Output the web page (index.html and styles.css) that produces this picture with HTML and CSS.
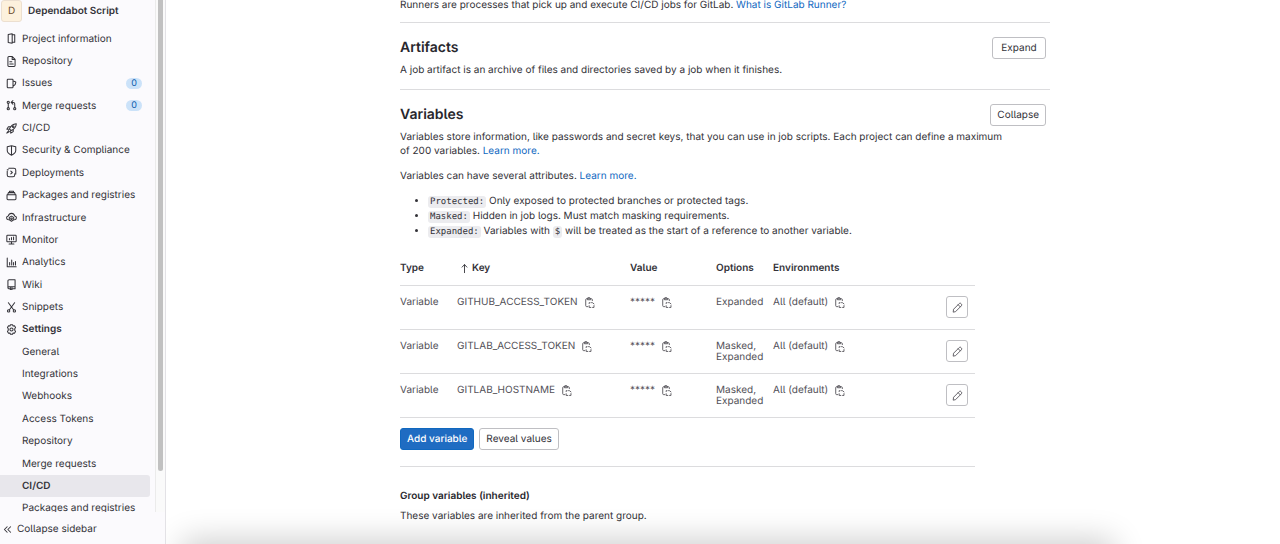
FILE: index.html
```html
<!DOCTYPE html>
<html lang="en">
<head>
<meta charset="utf-8">
<title>CI/CD Settings · Dependabot Script</title>
<link rel="stylesheet" href="styles.css">
</head>
<body>
<svg class="sprite" aria-hidden="true">
  <symbol id="i-info" viewBox="0 0 16 16"><path d="M9 1.200 3.200 2.300v11.400L9 14.800zM9 2.500h3.700v11H9"/></symbol>
  <symbol id="i-doc" viewBox="0 0 16 16"><path d="M2.800 2.200c0-.8.6-1.400 1.400-1.400h5l4 4v9c0 .8-.6 1.400-1.400 1.400H4.200c-.8 0-1.400-.6-1.400-1.400zM9 1v4h4M5.500 8.500h3M5.500 11.500h5"/></symbol>
  <symbol id="i-issues" viewBox="0 0 16 16"><path d="M1.800 2.800c0-.6.4-1 1-1h6.400c.6 0 1 .4 1 1v10.400c0 .6-.4 1-1 1H2.800c-.6 0-1-.4-1-1zM10.500 4.500l3 .8c.6.2.9.7.7 1.300l-1 3-2.700 2"/></symbol>
  <symbol id="i-merge" viewBox="0 0 16 16"><path d="M3.300 5v6M12.700 11V5.500c0-1.200-.8-2-2-2H8M10 1 7.500 3.500 10 6"/><circle cx="3.300" cy="3.300" r="1.600"/><circle cx="3.300" cy="12.700" r="1.600"/><circle cx="12.700" cy="12.700" r="1.600"/></symbol>
  <symbol id="i-rocket" viewBox="0 0 16 16"><path d="M5 8.500C7 4 10 1.500 15 1c-.3 5-3 8-7.500 10zM6 5.500H3.500L1.200 9l3.500.2M10.500 10v2.500L7 14.800l-.3-3.500M4 11l-2.800 3.800L5 12.500"/><circle cx="10.500" cy="5.500" r="1.200"/></symbol>
  <symbol id="i-shield" viewBox="0 0 16 16"><path d="M8 1 14.200 2.500V8c0 3-2.700 5.300-6.200 7C4.500 13.300 1.800 11 1.800 8V2.500zM8 1v14"/></symbol>
  <symbol id="i-deploy" viewBox="0 0 16 16"><path d="M4 1.800h7.500c1.500 0 2.700 1.200 2.700 2.700V10M1.800 6v5.500c0 1.500 1.200 2.700 2.700 2.700h5.700c1.500 0 2.500-1 2.500-2.500V10M1.800 4h1.500M7 6l2.200 2L7 10"/></symbol>
  <symbol id="i-package" viewBox="0 0 16 16"><path d="M1.500 6.800h13v6c0 .8-.6 1.400-1.400 1.400H2.900c-.8 0-1.400-.6-1.400-1.400zM2.500 6.800l1-3h9l1 3M5 3.500V1.800h6v1.700"/></symbol>
  <symbol id="i-infra" viewBox="0 0 16 16"><path d="M3.500 11.300C1.700 11 .8 9.800.8 8.500c0-1.500 1.100-2.600 2.600-2.800C4 3.500 5.700 2 8 2s4 1.500 4.600 3.700c1.500.2 2.600 1.300 2.600 2.800 0 1.300-.9 2.500-2.700 2.800"/><path d="m8 6 3.200 1.800v3.700L8 13.500l-3.200-2V7.800z"/><circle cx="8" cy="9.800" r="1.200"/></symbol>
  <symbol id="i-monitor" viewBox="0 0 16 16"><path d="M2.200 1.800h11.600c.6 0 1 .4 1 1v7.400c0 .6-.4 1-1 1H2.200c-.6 0-1-.4-1-1V2.800c0-.6.4-1 1-1zM4.500 14.500h7M8 11v3.500M5 6.500v2M8 5v3.500M11 4.500v4"/></symbol>
  <symbol id="i-chart" viewBox="0 0 16 16"><path d="M1.800 1.500v12.700h13M5.300 8v3.500M8.300 4.500v7M11 8v3.500M13.800 6.500v5"/></symbol>
  <symbol id="i-wiki" viewBox="0 0 16 16"><path d="M13.200 11.500V1.200H4.500c-1 0-1.700.7-1.700 1.700v9.900M13.200 11.300H4.500c-2.200 0-2.200 3 0 3H5M10 14.300h3.200v-3M6.300 12.500v3l1.200-1 1.200 1v-3"/></symbol>
  <symbol id="i-snip" viewBox="0 0 16 16"><path d="M3.500 1 11 11.200M12.500 1 5 11.200"/><circle cx="3.800" cy="13" r="1.700"/><circle cx="12.200" cy="13" r="1.700"/></symbol>
  <symbol id="i-gear" viewBox="0 0 16 16"><path d="M6.500 1h3l.8 1.900 2-.3 1.600 2.600L12.700 7v2l1.200 1.800-1.600 2.600-2-.3-.8 1.900h-3l-.8-1.900-2 .3-1.600-2.600L3.300 9V7L2.100 5.200l1.600-2.600 2 .3z"/><circle cx="8" cy="8" r="2.300"/></symbol>
  <symbol id="i-left" viewBox="0 0 16 16"><path d="M7.500 4 3.500 8l4 4M12.500 4l-4 4 4 4"/></symbol>
  <symbol id="i-up" viewBox="0 0 16 16"><path d="M8 14V2.500M4.500 6 8 2.300 11.500 6"/></symbol>
  <symbol id="i-copy" viewBox="0 0 16 16"><path d="M5.500 14H3.800c-.8 0-1.300-.5-1.300-1.300V3.800c0-.8.5-1.300 1.300-1.300h7c.8 0 1.300.5 1.300 1.300v1.500M5 2.500V4h4.600V2.500L8.500 1H6.100zM7.500 9.500V8.200h1.300M11 8.200h1.200L14.500 10M14.500 12.500v2.700h-2M10 15.200H7.500v-2.500"/></symbol>
  <symbol id="i-pencil" viewBox="0 0 16 16"><path d="m1.800 14.200.5-3.700 8.200-8.200c.8-.8 1.900-.8 2.600 0l.6.600c.7.700.7 1.800 0 2.600l-8.200 8.200zM9 4l3 3"/></symbol>
</svg>

<div class="layout">
  <aside class="sidebar">
    <div class="scroll">
      <div class="scroll-content">
        <a class="project" href="#"><span class="avatar">D</span><span>Dependabot Script</span></a>
        <nav aria-label="Project">
          <ul class="menu">
            <li><a href="#"><svg class="icon"><use href="#i-info"/></svg>Project information</a></li>
            <li><a href="#"><svg class="icon"><use href="#i-doc"/></svg>Repository</a></li>
            <li><a href="#"><svg class="icon"><use href="#i-issues"/></svg>Issues<span class="count">0</span></a></li>
            <li><a href="#"><svg class="icon"><use href="#i-merge"/></svg>Merge requests<span class="count">0</span></a></li>
            <li><a href="#"><svg class="icon"><use href="#i-rocket"/></svg>CI/CD</a></li>
            <li><a href="#"><svg class="icon"><use href="#i-shield"/></svg>Security &amp; Compliance</a></li>
            <li><a href="#"><svg class="icon"><use href="#i-deploy"/></svg>Deployments</a></li>
            <li><a href="#"><svg class="icon"><use href="#i-package"/></svg>Packages and registries</a></li>
            <li><a href="#"><svg class="icon"><use href="#i-infra"/></svg>Infrastructure</a></li>
            <li><a href="#"><svg class="icon"><use href="#i-monitor"/></svg>Monitor</a></li>
            <li><a href="#"><svg class="icon"><use href="#i-chart"/></svg>Analytics</a></li>
            <li><a href="#"><svg class="icon"><use href="#i-wiki"/></svg>Wiki</a></li>
            <li><a href="#"><svg class="icon"><use href="#i-snip"/></svg>Snippets</a></li>
            <li><a class="open" href="#"><svg class="icon"><use href="#i-gear"/></svg>Settings</a></li>
            <li class="sub"><a href="#">General</a></li>
            <li class="sub"><a href="#">Integrations</a></li>
            <li class="sub"><a href="#">Webhooks</a></li>
            <li class="sub"><a href="#">Access Tokens</a></li>
            <li class="sub"><a href="#">Repository</a></li>
            <li class="sub"><a href="#">Merge requests</a></li>
            <li class="sub"><a class="current" href="#" aria-current="page">CI/CD</a></li>
            <li class="sub"><a href="#">Packages and registries</a></li>
          </ul>
        </nav>
      </div>
      <div class="track"><div class="thumb"></div></div>
    </div>
    <button class="collapse" type="button"><svg class="icon"><use href="#i-left"/></svg>Collapse sidebar</button>
  </aside>

  <main class="main">
    <div class="container">
      <section class="section runners">
        <p>Runners are processes that pick up and execute CI/CD jobs for GitLab. <a href="#">What is GitLab Runner?</a></p>
      </section>
      <section class="section">
        <div class="heading"><h2>Artifacts</h2><button class="btn" type="button">Expand</button></div>
        <p>A job artifact is an archive of files and directories saved by a job when it finishes.</p>
      </section>
      <section class="section variables">
        <div class="heading"><h2>Variables</h2><button class="btn" type="button">Collapse</button></div>
        <p class="intro">Variables store information, like passwords and secret keys, that you can use in job scripts. Each project can define a maximum of 200 variables. <a href="#">Learn more.</a></p>
        <div class="body">
          <p>Variables can have several attributes. <a href="#">Learn more.</a></p>
          <ul class="notes">
            <li><code>Protected:</code> Only exposed to protected branches or protected tags.</li>
            <li><code>Masked:</code> Hidden in job logs. Must match masking requirements.</li>
            <li><code>Expanded:</code> Variables with <code>$</code> will be treated as the start of a reference to another variable.</li>
          </ul>
          <table class="table">
            <colgroup><col class="c-type"><col class="c-key"><col class="c-value"><col class="c-options"><col class="c-env"><col></colgroup>
            <thead>
              <tr><th>Type</th><th><span class="sort"><svg class="icon"><use href="#i-up"/></svg>Key</span></th><th>Value</th><th>Options</th><th>Environments</th><th aria-label="Actions"></th></tr>
            </thead>
            <tbody>
              <tr>
                <td>Variable</td>
                <td><span class="cell">GITHUB_ACCESS_TOKEN<button class="copy" type="button" aria-label="Copy key"><svg class="icon"><use href="#i-copy"/></svg></button></span></td>
                <td><span class="cell">*****<button class="copy" type="button" aria-label="Copy value"><svg class="icon"><use href="#i-copy"/></svg></button></span></td>
                <td>Expanded</td>
                <td><span class="cell">All (default)<button class="copy" type="button" aria-label="Copy environment"><svg class="icon"><use href="#i-copy"/></svg></button></span></td>
                <td class="actions"><button class="btn edit" type="button" aria-label="Edit"><svg class="icon"><use href="#i-pencil"/></svg></button></td>
              </tr>
              <tr>
                <td>Variable</td>
                <td><span class="cell">GITLAB_ACCESS_TOKEN<button class="copy" type="button" aria-label="Copy key"><svg class="icon"><use href="#i-copy"/></svg></button></span></td>
                <td><span class="cell">*****<button class="copy" type="button" aria-label="Copy value"><svg class="icon"><use href="#i-copy"/></svg></button></span></td>
                <td>Masked, Expanded</td>
                <td><span class="cell">All (default)<button class="copy" type="button" aria-label="Copy environment"><svg class="icon"><use href="#i-copy"/></svg></button></span></td>
                <td class="actions"><button class="btn edit" type="button" aria-label="Edit"><svg class="icon"><use href="#i-pencil"/></svg></button></td>
              </tr>
              <tr>
                <td>Variable</td>
                <td><span class="cell">GITLAB_HOSTNAME<button class="copy" type="button" aria-label="Copy key"><svg class="icon"><use href="#i-copy"/></svg></button></span></td>
                <td><span class="cell">*****<button class="copy" type="button" aria-label="Copy value"><svg class="icon"><use href="#i-copy"/></svg></button></span></td>
                <td>Masked, Expanded</td>
                <td><span class="cell">All (default)<button class="copy" type="button" aria-label="Copy environment"><svg class="icon"><use href="#i-copy"/></svg></button></span></td>
                <td class="actions"><button class="btn edit" type="button" aria-label="Edit"><svg class="icon"><use href="#i-pencil"/></svg></button></td>
              </tr>
            </tbody>
          </table>
          <div class="buttons"><button class="btn primary" type="button">Add variable</button><button class="btn" type="button">Reveal values</button></div>
          <div class="group">
            <h3>Group variables (inherited)</h3>
            <p>These variables are inherited from the parent group.</p>
          </div>
        </div>
      </section>
    </div>
    <div class="shade"></div>
  </main>
</div>
</body>
</html>
```
FILE: styles.css
```css
* { box-sizing: border-box; }

body {
  margin: 0;
  background: #fff;
  color: #333238;
  font: 10px/14px Inter, "Noto Sans", sans-serif;
  font-feature-settings: "cv05";
  text-rendering: geometricPrecision;
}

ul, p, h2, h3 { margin: 0; padding: 0; }
a { color: #1068bf; text-decoration: none; }
button { font: inherit; font-feature-settings: inherit; text-rendering: inherit; color: inherit; cursor: pointer; }

.sprite { position: absolute; width: 0; height: 0; }

.icon {
  flex: none;
  width: 11px;
  height: 11px;
  fill: none;
  stroke: currentColor;
  stroke-width: 1.5;
  stroke-linecap: round;
  stroke-linejoin: round;
}

.layout { display: flex; height: 100vh; overflow: hidden; }

.sidebar {
  flex: none;
  display: flex;
  flex-direction: column;
  width: 166px;
  border-right: 1px solid #e3e2e6;
  background: #fbfafd;
}
.sidebar a { color: inherit; }
.scroll { flex: 1; min-height: 0; display: flex; overflow: hidden; }
.scroll-content { flex: 1; display: flex; flex-direction: column; height: calc(100% + 8px); padding-right: 5px; }

.project { display: flex; align-items: center; gap: 6px; height: 28px; padding: 0 0 6px 1px; font-weight: 600; }
.avatar {
  display: grid;
  place-items: center;
  width: 21px;
  height: 22px;
  border: 1px solid #ecdfd0;
  border-radius: 3px;
  background: #fdf1dd;
  color: #6b4a2c;
  font-weight: 400;
}

nav { flex: 1; display: flex; }
.menu { flex: 1; display: grid; grid-auto-rows: 1fr; list-style: none; }
.menu li { display: flex; padding-bottom: 1px; }
.menu a { flex: 1; display: flex; align-items: center; gap: 5px; padding: 0 8px 0 6px; border-radius: 0 3px 3px 0; }
.menu .sub a { padding-left: 22px; }
.menu .open { font-weight: 600; }
.menu .current { background: #e8e7ec; font-weight: 600; }
.count {
  margin-left: auto;
  padding: 0 5px;
  border-radius: 6px;
  background: #cbe2f9;
  color: #0b5cad;
  font-size: 9px;
  line-height: 11px;
}

.track { flex: none; width: 10px; padding: 0 2px; border-left: 1px solid #ebebeb; background: #fafafa; }
.thumb { height: 92%; border-radius: 0 0 3px 3px; background: #c1c1c1; }

.collapse {
  display: flex;
  align-items: center;
  gap: 4px;
  height: 32px;
  padding: 2px 2px 0;
  border: 0;
  background: none;
}

.main { position: relative; flex: 1; overflow: hidden; }
.container { max-width: 654px; margin: 0 auto; padding-left: 4px; }
.shade {
  position: absolute;
  top: 100%;
  left: 20px;
  right: 170px;
  height: 40px;
  box-shadow: 0 0 32px 4px rgba(0, 0, 0, 0.2);
}

.section { padding: 14px 0 12px; border-bottom: 1px solid #dcdcde; }
.runners { padding: 0 0 10px; margin-top: -2px; }
.variables { border-bottom: 0; }
.heading { display: flex; justify-content: space-between; padding-right: 4px; margin-bottom: 4px; }
h2 { font-size: 14px; line-height: 22px; font-weight: 600; color: #28272d; }
h3 { font-size: 10px; line-height: 14px; font-weight: 600; color: #28272d; }

.btn {
  height: 22px;
  padding: 0 6px;
  border: 1px solid #bfbfc3;
  border-radius: 3px;
  background: #fff;
  line-height: 14px;
}
.heading .btn { min-width: 54px; }
.primary { border-color: #1068bf; background: #1f6cc2; color: #fff; font-weight: 500; }

.intro { max-width: 610px; margin-bottom: 11px; }
.body { max-width: 575px; }
.notes { margin: 11px 0 0; padding-left: 28px; line-height: 15px; }
code {
  padding: 1px 2px;
  border-radius: 3px;
  background: #ececef;
  font: 9px/12px "DejaVu Sans Mono", monospace;
}

.table { width: 100%; margin-top: 13px; border-collapse: collapse; table-layout: fixed; line-height: 11px; }
.c-type { width: 57px; }
.c-key { width: 173px; }
.c-value { width: 86px; }
.c-options { width: 57px; }
.c-env { width: 115px; }
th, td { padding: 11px 0; border-bottom: 1px solid #dcdcde; text-align: left; vertical-align: top; }
th { font-weight: 600; }
td { height: 44px; padding-bottom: 10px; color: #535158; }
.sort { display: flex; gap: 2px; padding-left: 2px; }
.cell { display: flex; align-items: center; gap: 6px; }
.copy { display: flex; padding: 0; border: 0; background: none; }
.actions { padding: 10px 7px 10px 0; }
.edit { display: flex; width: 22px; margin-left: auto; padding: 0; align-items: center; justify-content: center; }
.table .icon { stroke-width: 1.3; }

.buttons { display: flex; gap: 5px; padding: 10px 0 16px; border-bottom: 1px solid #dcdcde; }
.group { padding-top: 22px; }
.group p { margin-top: 6px; }
```
